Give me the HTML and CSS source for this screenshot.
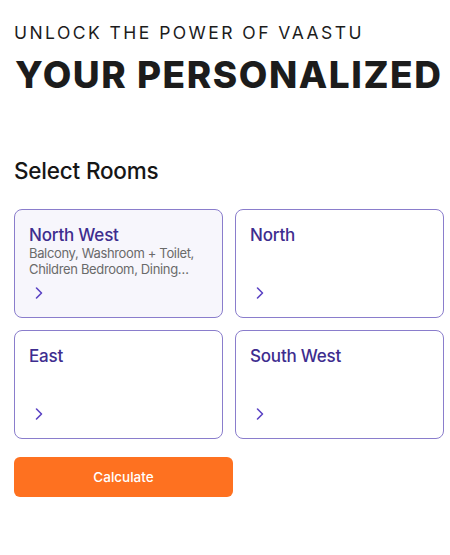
FILE: index.html
```html
<!DOCTYPE html>
<html>
<head>
<meta charset="utf-8">
<link rel="stylesheet" href="styles.css">
</head>
<body>
<div class="page">
  <header class="hero">
    <div class="eyebrow">UNLOCK THE POWER OF VAASTU</div>
    <h1 class="headline">YOUR PERSONALIZED</h1>
  </header>
  <h2 class="section-title">Select Rooms</h2>
  <div class="grid">
    <div class="card active">
      <div class="card-title">North West</div>
      <div class="card-sub">Balcony, Washroom + Toilet, Children Bedroom, Dining…</div>
      <svg class="chev" viewBox="0 0 10 14" width="10" height="14"><path d="M2.5 2 L7.5 7 L2.5 12" fill="none" stroke="#5b43c4" stroke-width="1.6" stroke-linecap="round" stroke-linejoin="round"/></svg>
    </div>
    <div class="card">
      <div class="card-title">North</div>
      <svg class="chev" viewBox="0 0 10 14" width="10" height="14"><path d="M2.5 2 L7.5 7 L2.5 12" fill="none" stroke="#5b43c4" stroke-width="1.6" stroke-linecap="round" stroke-linejoin="round"/></svg>
    </div>
    <div class="card">
      <div class="card-title">East</div>
      <svg class="chev" viewBox="0 0 10 14" width="10" height="14"><path d="M2.5 2 L7.5 7 L2.5 12" fill="none" stroke="#5b43c4" stroke-width="1.6" stroke-linecap="round" stroke-linejoin="round"/></svg>
    </div>
    <div class="card">
      <div class="card-title">South West</div>
      <svg class="chev" viewBox="0 0 10 14" width="10" height="14"><path d="M2.5 2 L7.5 7 L2.5 12" fill="none" stroke="#5b43c4" stroke-width="1.6" stroke-linecap="round" stroke-linejoin="round"/></svg>
    </div>
  </div>
  <button class="btn">Calculate</button>
</div>
</body>
</html>
```
FILE: styles.css
```css
* { box-sizing: border-box; }
html, body { margin: 0; padding: 0; background: #fff; }
body { font-family: Inter, "Noto Sans", sans-serif; color: #1b1b1b; }
.page { padding: 22px 6px 0 14px; width: 450px; }
.hero { margin: 0; }
.eyebrow {
  font-family: Inter, sans-serif;
  font-size: 17.5px;
  font-weight: 400;
  letter-spacing: 2.45px;
  line-height: 22px;
  color: #1c1c1c;
}
.headline {
  margin: 11px 0 0 1px;
  font-family: Inter, sans-serif;
  font-size: 37px;
  font-weight: 800;
  line-height: 40px;
  letter-spacing: 1.55px;
  color: #1c1c1c;
  white-space: nowrap;
}
.section-title {
  margin: 63px 0 0 0;
  font-size: 22.5px;
  font-weight: 500;
  line-height: 26px;
  letter-spacing: -0.2px;
  color: #161616;
}
.grid {
  margin-top: 25px;
  display: grid;
  grid-template-columns: 209px 209px;
  grid-auto-rows: 109px;
  column-gap: 12px;
  row-gap: 12px;
}
.card {
  border: 1px solid #8a7dcc;
  border-radius: 8px;
  background: #fff;
  padding: 14px 14px 14px 14px;
  display: flex;
  flex-direction: column;
  position: relative;
}
.card.active { background: #f7f6fc; }
.card-title {
  font-size: 17px;
  font-weight: 500;
  line-height: 22px;
  color: #3e2d8f;
  letter-spacing: -0.2px;
}
.card-sub {
  margin-top: 0px;
  font-size: 13px;
  line-height: 15.5px;
  color: #6a6a6a;
  letter-spacing: -0.35px;
  white-space: normal;
}
.chev {
  margin-top: auto;
  margin-left: 5px;
  margin-bottom: 3px;
  display: block;
}
.btn {
  margin-top: 18px;
  width: 219px;
  height: 40px;
  border: none;
  border-radius: 6px;
  background: #fe7120;
  color: #fff;
  font-family: Inter, sans-serif;
  font-size: 13.5px;
  font-weight: 500;
  display: block;
}
```
